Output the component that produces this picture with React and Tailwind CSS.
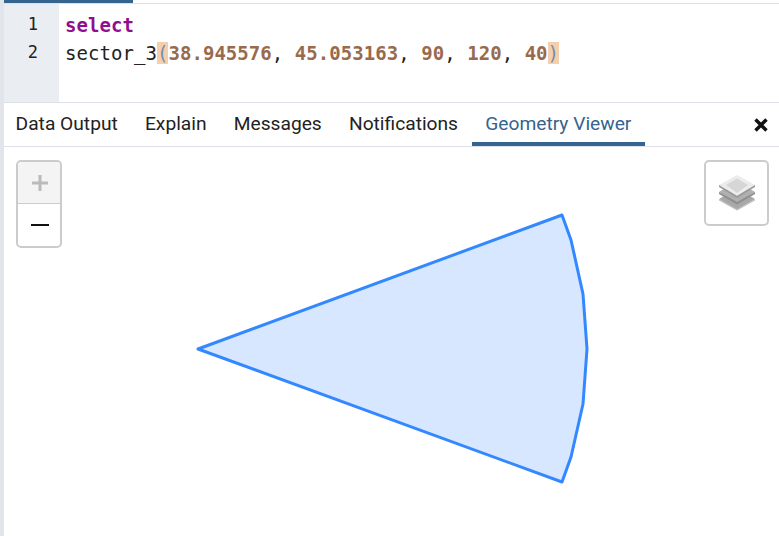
import React from 'react';

const TABS = ['Data Output', 'Explain', 'Messages', 'Notifications', 'Geometry Viewer'];

const SECTOR = '198,349 562,215 571,240 583,294 587,349 583,404 571,457 562,482';

function Num({ children }) {
    return <span className="font-bold text-[#996a4c]">{children}</span>;
}

function Bracket({ children }) {
    return <span className="bg-[#f5cfad] text-[#6f8fb0]">{children}</span>;
}

function Editor() {
    return (
        <div className="relative flex h-[103px] border-b border-[#dde0e8] pt-1">
            <div className="absolute left-0 top-0 h-[3px] w-[129px] bg-[#35648f]" />
            <div className="absolute left-0 right-0 top-[3px] h-px bg-[#dde0e8]" />
            <div className="w-[55px] bg-[#eaedf2] pr-[21px] pt-[6px] text-right font-['DejaVu_Sans_Mono',monospace] text-[17px] leading-[28px] text-[#222]">
                <div>1</div>
                <div>2</div>
            </div>
            <div className="whitespace-pre pl-1.5 pt-[7px] font-['DejaVu_Sans_Mono',monospace] text-[19px] leading-[28px] tracking-[0.05px] text-[#222]">
                <div className="font-bold text-[#8f0f8f]">select</div>
                <div>
                    sector_3<Bracket>(</Bracket><Num>38.945576</Num>, <Num>45.053163</Num>, <Num>90</Num>, <Num>120</Num>, <Num>40</Num><Bracket>)</Bracket>
                </div>
            </div>
        </div>
    );
}

function Tabs() {
    return (
        <div className="flex h-11 items-stretch border-b border-[#dde0e8]">
            <div className="-ml-0.5 flex flex-1 items-stretch">
                {TABS.map((tab) => {
                    const active = tab === 'Geometry Viewer';
                    return (
                        <div
                            key={tab}
                            className={`flex items-start border-b-4 px-[13.6px] pt-[9px] text-[19.2px] leading-[24px] ${active ? 'border-[#35648f] text-[#35648f]' : 'border-transparent text-[#222]'}`}
                        >
                            {tab}
                        </div>
                    );
                })}
            </div>
            <svg width="14" height="14" viewBox="0 0 14 14" className="mr-[11px] mt-[15px]">
                <path d="M1.5 1.5 L12.5 12.5 M12.5 1.5 L1.5 12.5" stroke="#111" strokeWidth="3.4" fill="none" />
            </svg>
        </div>
    );
}

function ZoomControl() {
    return (
        <div className="absolute left-3 top-[13px] h-[88px] w-[46px] overflow-hidden rounded-[5px] border-2 border-[#cccccc] bg-white">
            <div className="flex h-[42px] items-center justify-center border-b border-[#cccccc] bg-[#f4f4f4]">
                <svg width="18" height="18" viewBox="0 0 18 18" className="ml-px mt-px">
                    <path d="M9 1 V17 M1 9 H17" stroke="#bbbbbb" strokeWidth="3" />
                </svg>
            </div>
            <div className="flex h-[42px] items-center justify-center">
                <svg width="18" height="4" viewBox="0 0 18 4" className="ml-px">
                    <path d="M0 2 H18" stroke="#111" strokeWidth="2" />
                </svg>
            </div>
        </div>
    );
}

function LayersControl() {
    return (
        <div className="absolute right-[10px] top-[13px] flex h-[66px] w-[65px] items-center justify-center rounded-[5px] border-2 border-[#cccccc] bg-white">
            <svg width="38" height="36" viewBox="0 0 38 36">
                <path d="M1 24 L19 13 L37 24 L19 35 Z" fill="#a8a8a8" />
                <path d="M1 24 L19 34 L37 24 L37 25.5 L19 35.5 L1 25.5 Z" fill="#bfbfbf" />
                <path d="M1 17 L19 6 L37 17 L19 28 Z" fill="#b0b0b0" />
                <path d="M1 17 L19 27 L37 17 L37 19 L19 29.5 L1 19 Z" fill="#8f8f8f" />
                <path d="M1 10 L19 0 L37 10 L19 21 Z" fill="#ececec" />
                <path d="M8 10 L19 3.5 L30 10 L19 18 Z" fill="#d6d6d6" />
                <path d="M1 10 L19 21 L37 10 L37 12 L19 23 L1 12 Z" fill="#9a9a9a" />
            </svg>
        </div>
    );
}

function MapView() {
    return (
        <div className="relative flex-1 overflow-hidden bg-white">
            <svg width="775" height="389" viewBox="4 147 775 389" className="block">
                <polygon points={SECTOR} fill="#3388ff" fillOpacity="0.2" stroke="#3388ff" strokeWidth="3" strokeLinejoin="round" />
            </svg>
            <ZoomControl />
            <LayersControl />
        </div>
    );
}

export default function App() {
    return (
        <div className="h-[536px] w-[779px] overflow-hidden bg-white font-['Roboto',sans-serif]">
            <div className="flex h-full flex-col border-l-4 border-[#e3e5ec]">
                <Editor />
                <Tabs />
                <MapView />
            </div>
        </div>
    );
}
